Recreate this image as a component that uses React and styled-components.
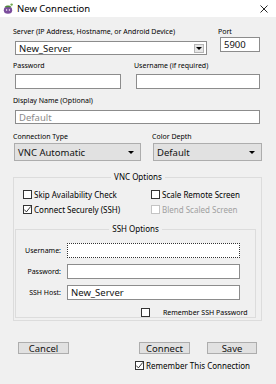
import styled, { createGlobalStyle } from 'styled-components'

const Global = createGlobalStyle`
  html, body { margin: 0; padding: 0; background: #f0f0f0; }
  body { font-family: "Noto Sans", "Open Sans", sans-serif; color: #000; }
`

const Window = styled.div`
  width: 276px;
  height: 384px;
  background: #f0f0f0;
  display: flex;
  flex-direction: column;
  overflow: hidden;
`

const TitleBar = styled.div`
  height: 17px;
  flex-shrink: 0;
  background: #fff;
  display: flex;
  align-items: center;
  padding: 0 8px 0 3px;
  box-sizing: border-box;
`

const Title = styled.span`
  flex: 1;
  margin-left: 4px;
  font-size: 9.5px;
  line-height: 17px;
`

const Body = styled.div`
  display: flex;
  flex-direction: column;
  padding-top: 11px;
`

const Row = styled.div`
  display: flex;
  align-items: flex-start;
  margin-top: ${p => p.$mt || 0}px;
`

const Field = styled.div`
  display: flex;
  flex-direction: column;
  flex-shrink: 0;
  margin-left: ${p => p.$ml || 0}px;
`

const Label = styled.div`
  font-size: 7px;
  line-height: 8px;
  height: 8px;
  white-space: nowrap;
`

const TextBox = styled.div`
  box-sizing: border-box;
  flex-shrink: 0;
  width: ${p => p.$w}px;
  height: ${p => p.$h || 15}px;
  margin-top: ${p => p.$mt || 0}px;
  margin-left: ${p => (p.$ml ?? 2)}px;
  background: #fff;
  border: 1px ${p => (p.$focus ? 'dotted #333' : 'solid #8c8c8c')};
  display: flex;
  align-items: center;
  padding-left: 3px;
  font-size: 9.5px;
  white-space: nowrap;
  overflow: hidden;
  color: ${p => (p.$placeholder ? '#8a8a8a' : '#111')};
`

const DropButton = styled.span`
  margin-left: auto;
  margin-right: 2px;
  width: 10px;
  height: 9px;
  box-sizing: border-box;
  background: #e6e6e6;
  border: 1px solid #b5b5b5;
  display: flex;
  align-items: center;
  justify-content: center;
`

const Arrow = styled.span`
  width: 0;
  height: 0;
  border-left: 3px solid transparent;
  border-right: 3px solid transparent;
  border-top: 3px solid #000;
  margin-left: ${p => (p.$auto ? 'auto' : '0')};
`

const Select = styled.div`
  box-sizing: border-box;
  width: ${p => p.$w}px;
  height: 18px;
  margin-top: 2px;
  margin-left: 1px;
  background: #e1e1e1;
  border: 1px solid #adadad;
  display: flex;
  align-items: center;
  padding: 0 6px 0 3px;
  font-size: 9.5px;
  color: #111;
  white-space: nowrap;
`

const Group = styled.fieldset`
  box-sizing: border-box;
  min-width: 0;
  width: ${p => p.$w}px;
  margin: ${p => p.$mt}px 0 0 ${p => p.$ml}px;
  padding: ${p => p.$pad};
  border: 1px solid #dcdcdc;
`

const Legend = styled.legend`
  margin: 0 auto;
  padding: 0 3px;
  font-size: 8px;
  line-height: 10px;
`

const CheckGrid = styled.div`
  display: grid;
  grid-template-columns: 128px auto;
  row-gap: 6px;
  margin-left: 8px;
`

const Check = styled.div`
  display: flex;
  align-items: center;
  height: 9px;
  margin-left: ${p => p.$ml || 0}px;
  margin-top: ${p => p.$mt || 0}px;
`

const Box = styled.span`
  box-sizing: border-box;
  flex-shrink: 0;
  width: 9px;
  height: 9px;
  background: #fff;
  border: 1px solid ${p => (p.$disabled ? '#c4c4c4' : '#333')};
  display: flex;
  align-items: center;
  justify-content: center;
`

const CheckText = styled.span`
  margin-left: ${p => p.$gap ?? 2}px;
  font-size: ${p => p.$size || 8}px;
  line-height: 9px;
  white-space: nowrap;
  color: ${p => (p.$disabled ? '#a0a0a0' : '#000')};
`

const SshRow = styled.div`
  display: flex;
  align-items: center;
  margin-top: ${p => p.$mt || 0}px;
`

const SshLabel = styled.span`
  width: 45px;
  text-align: right;
  font-size: 7px;
  line-height: 8px;
  white-space: nowrap;
`

const Button = styled.div`
  box-sizing: border-box;
  width: ${p => p.$w}px;
  height: 12px;
  margin-left: ${p => p.$ml}px;
  background: #e1e1e1;
  border: 1px solid #adadad;
  display: flex;
  align-items: center;
  justify-content: center;
  font-size: 9.5px;
  color: #111;
`

const Tick = () => (
  <svg width="7" height="7" viewBox="0 0 7 7">
    <polyline points="0.3,3.6 2.4,5.9 6.8,0.4" fill="none" stroke="#222" strokeWidth="0.9" />
  </svg>
)

const AppIcon = () => (
  <svg width="10" height="11" viewBox="0 0 10 11">
    <ellipse cx="5" cy="7.2" rx="4.2" ry="3.6" fill="#7b4d9c" />
    <path d="M1.5 4.2 C2.5 1.8 7.5 1.8 8.5 4.2 Z" fill="#4f8a3a" />
    <circle cx="8.6" cy="1.6" r="1.2" fill="#6fa84c" />
    <circle cx="3.6" cy="7" r="0.7" fill="#fff" />
    <circle cx="6.4" cy="7" r="0.7" fill="#fff" />
  </svg>
)

const CloseIcon = () => (
  <svg width="8" height="8" viewBox="0 0 8 8">
    <path d="M0.5 0.5 L7.5 7.5 M7.5 0.5 L0.5 7.5" stroke="#111" strokeWidth="0.9" />
  </svg>
)

export default function App() {
  return (
    <Window>
      <Global />
      <TitleBar>
        <AppIcon />
        <Title>New Connection</Title>
        <CloseIcon />
      </TitleBar>

      <Body>
        <Row>
          <Field $ml={13}>
            <Label>Server (IP Address, Hostname, or Android Device)</Label>
            <TextBox $w={192} $h={14} $mt={5}>
              New_Server
              <DropButton><Arrow /></DropButton>
            </TextBox>
          </Field>
          <Field $ml={11}>
            <Label>Port</Label>
            <TextBox $w={40} $mt={1}>5900</TextBox>
          </Field>
        </Row>

        <Row $mt={7}>
          <Field $ml={13}>
            <Label>Password</Label>
            <TextBox $w={106} $mt={4} />
          </Field>
          <Field $ml={13}>
            <Label>Username (if required)</Label>
            <TextBox $w={124} $mt={4} />
          </Field>
        </Row>

        <Row $mt={8}>
          <Field $ml={13}>
            <Label>Display Name (Optional)</Label>
            <TextBox $w={245} $h={14} $mt={5} $placeholder>Default</TextBox>
          </Field>
        </Row>

        <Row $mt={9}>
          <Field $ml={13}>
            <Label>Connection Type</Label>
            <Select $w={127}>VNC Automatic<Arrow $auto /></Select>
          </Field>
          <Field $ml={11}>
            <Label>Color Depth</Label>
            <Select $w={109}>Default<Arrow $auto /></Select>
          </Field>
        </Row>

        <Group $w={249} $ml={13} $mt={11} $pad="8px 0 2px 1px">
          <Legend>VNC Options</Legend>
          <CheckGrid>
            <Check><Box /><CheckText>Skip Availability Check</CheckText></Check>
            <Check><Box /><CheckText>Scale Remote Screen</CheckText></Check>
            <Check><Box><Tick /></Box><CheckText>Connect Securely (SSH)</CheckText></Check>
            <Check><Box $disabled /><CheckText $disabled>Blend Scaled Screen</CheckText></Check>
          </CheckGrid>

          <Group $w={241} $ml={0} $mt={10} $pad="9px 0 0 0">
            <Legend>SSH Options</Legend>
            <SshRow>
              <SshLabel>Username:</SshLabel>
              <TextBox $w={173} $ml={6} $focus />
            </SshRow>
            <SshRow $mt={6}>
              <SshLabel>Password:</SshLabel>
              <TextBox $w={173} $ml={6} />
            </SshRow>
            <SshRow $mt={6}>
              <SshLabel>SSH Host:</SshLabel>
              <TextBox $w={173} $ml={6}>New_Server</TextBox>
            </SshRow>
            <Check $ml={125} $mt={8}>
              <Box />
              <CheckText $gap={13} $size={7}>Remember SSH Password</CheckText>
            </Check>
          </Group>
        </Group>

        <Row $mt={21}>
          <Button $w={51} $ml={18}>Cancel</Button>
          <Button $w={51} $ml={70}>Connect</Button>
          <Button $w={50} $ml={17}>Save</Button>
        </Row>

        <Check $ml={135} $mt={7}>
          <Box><Tick /></Box>
          <CheckText>Remember This Connection</CheckText>
        </Check>
      </Body>
    </Window>
  )
}
